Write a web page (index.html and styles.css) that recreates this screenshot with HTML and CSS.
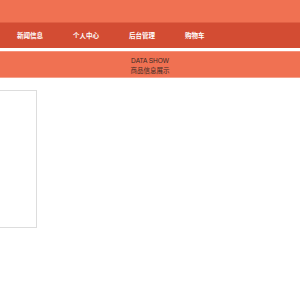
FILE: index.html
```html
<!DOCTYPE html>
<html>
	<head>
		<meta charset="utf-8" />
		<title>DATA SHOW</title>
		<link rel="stylesheet" href="styles.css">
	</head>
	<body>
		<div class="top"></div>
		<div class="nav">
			<ul>
				<li>新闻信息</li>
				<li>个人中心</li>
				<li>后台管理</li>
				<li>购物车</li>
			</ul>
		</div>
		<div class="banner">
			<p>DATA SHOW</p>
			<p>商品信息展示</p>
		</div>
		<div class="main">
			<div class="box"></div>
		</div>
	</body>
</html>
```
FILE: styles.css
```css
*{margin: 0;padding: 0;}
body{background: #fff;font-family: "Liberation Sans", "Noto Sans CJK SC", sans-serif;}
.top{height: 22px;background: #f07152;border-bottom: 1px solid #e05f43;}
.nav{height: 25px;background: #d34c33;}
.nav ul{display: flex;padding-left: 17px;list-style-type: none;}
.nav ul li{width: 56px;height: 25px;line-height: 25px;font-size: 6.5px;color: #fff;font-weight: bold;}
.banner{margin-top: 3px;height: 27px;background: #f07152;border-top: 1px solid #f5917a;border-bottom: 1px solid #f5a08a;text-align: center;font-size: 6.5px;color: #3a2a25;display: flex;flex-direction: column;justify-content: center;line-height: 10px;padding-top: 2px;box-sizing: border-box;}
.main{padding-top: 12px;}
.box{width: 36px;height: 136px;border: 1px solid #ddd;border-left: none;}
```
